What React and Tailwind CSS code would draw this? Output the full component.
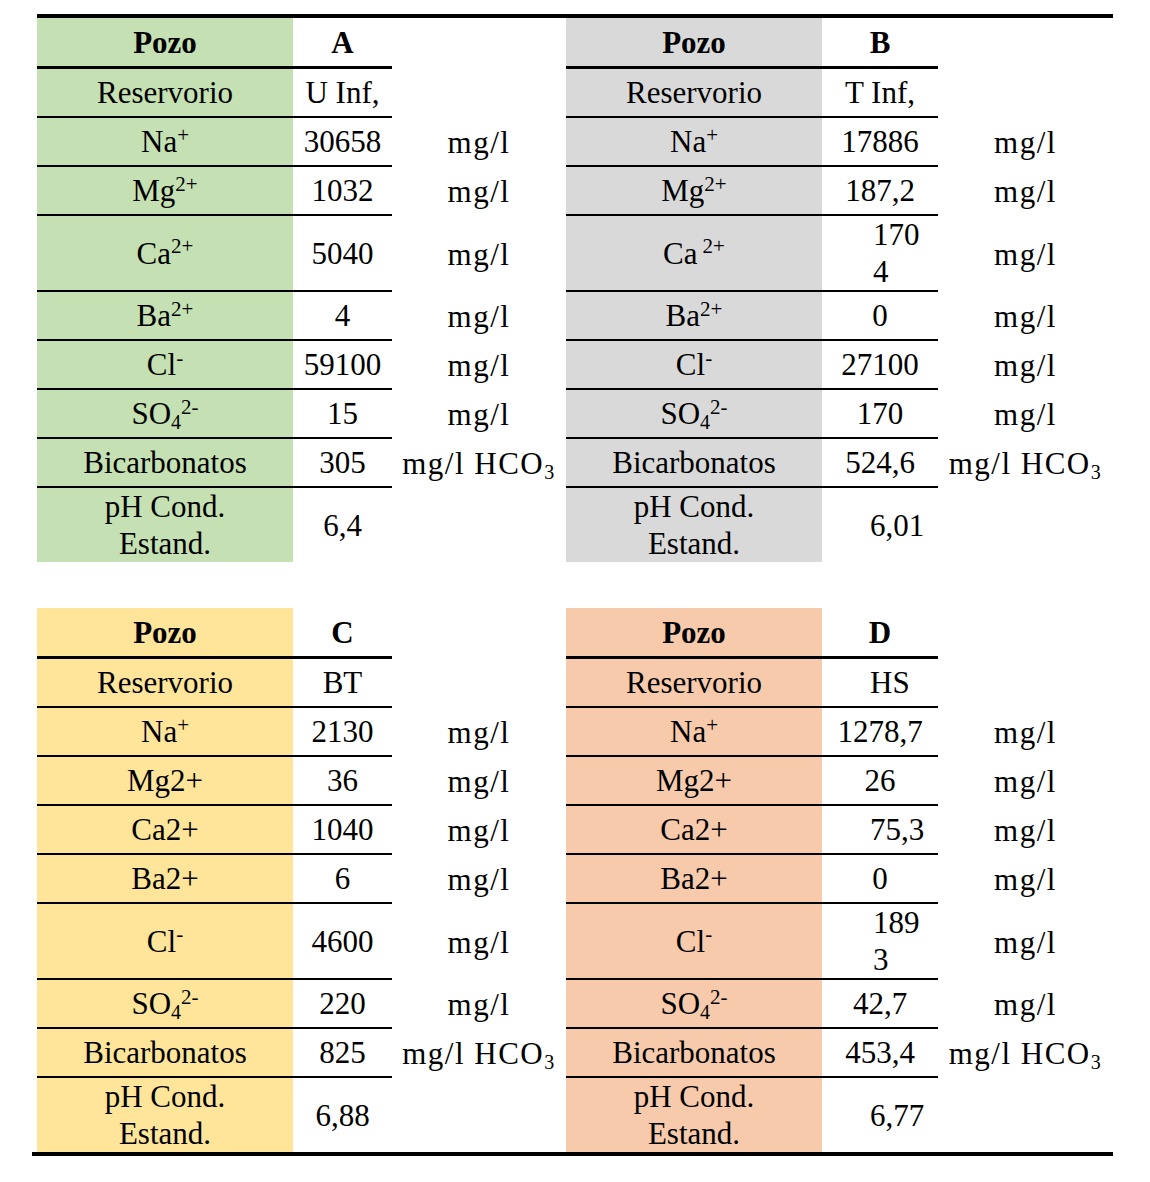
import React from 'react'

const font = { fontFamily: '"Liberation Serif", "Times New Roman", serif' }

const Sup = ({ children, gap }) => (
  <sup className={`text-[21px] ${gap ? 'ml-[5px]' : ''}`}>{children}</sup>
)
const Sub = ({ children }) => <sub className="text-[20px]">{children}</sub>

const ions = {
  na: <>Na<Sup>+</Sup></>,
  mg: <>Mg<Sup>2+</Sup></>,
  ca: <>Ca<Sup>2+</Sup></>,
  caGap: <>Ca<Sup gap>2+</Sup></>,
  ba: <>Ba<Sup>2+</Sup></>,
  cl: <>Cl<Sup>-</Sup></>,
  so4: <>SO<Sub>4</Sub><Sup>2-</Sup></>,
  bic: <>Bicarbonatos</>,
  ph: <span className="flex flex-col items-center">
    <span>pH Cond.</span>
    <span>Estand.</span>
  </span>,
}

const hco3 = <>mg/l HCO<Sub>3</Sub></>

// each section is one table: [left well, right well]
const sections = [
  {
    wells: [
      { name: 'A', bg: 'bg-[#c5e0b3]', res: 'U Inf,' },
      { name: 'B', bg: 'bg-[#d9d9d9]', res: 'T Inf,' },
    ],
    rows: [
      { l: ions.na, a: '30658', b: '17886', unit: 'mg/l' },
      { l: ions.mg, a: '1032', b: '187,2', unit: 'mg/l' },
      { l: ions.ca, r: ions.caGap, a: '5040', b: ['170', '4'], unit: 'mg/l' },
      { l: ions.ba, a: '4', b: '0', unit: 'mg/l' },
      { l: ions.cl, a: '59100', b: '27100', unit: 'mg/l' },
      { l: ions.so4, a: '15', b: '170', unit: 'mg/l' },
      { l: ions.bic, a: '305', b: '524,6', unit: hco3 },
      { l: ions.ph, a: '6,4', b: '6,01', bIndent: true, last: true },
    ],
  },
  {
    wells: [
      { name: 'C', bg: 'bg-[#ffe599]', res: 'BT' },
      { name: 'D', bg: 'bg-[#f7caac]', res: 'HS', resIndent: true },
    ],
    rows: [
      { l: ions.na, a: '2130', b: '1278,7', unit: 'mg/l' },
      { l: 'Mg2+', a: '36', b: '26', unit: 'mg/l' },
      { l: 'Ca2+', a: '1040', b: '75,3', bIndent: true, unit: 'mg/l' },
      { l: 'Ba2+', a: '6', b: '0', unit: 'mg/l' },
      { l: ions.cl, a: '4600', b: ['189', '3'], unit: 'mg/l' },
      { l: ions.so4, a: '220', b: '42,7', unit: 'mg/l' },
      { l: ions.bic, a: '825', b: '453,4', unit: hco3 },
      { l: ions.ph, a: '6,88', b: '6,77', bIndent: true, last: true },
    ],
  },
]

// children wrapped in a span so sup/sub stay inline instead of becoming flex items
function Cell({ children, className = '', line = 'border-b-2', indent, bold }) {
  return (
    <div
      className={`flex items-center min-h-[49px] leading-[37px] border-black ${line} ${
        indent ? 'justify-start pl-[48px]' : 'justify-center'
      } ${bold ? 'font-bold' : ''} ${className}`}
    >
      <span>{children}</span>
    </div>
  )
}

function Value({ v, indent, last }) {
  if (Array.isArray(v)) {
    return (
      <Cell line={last ? '' : 'border-b-2'} indent>
        <span className="flex flex-col items-start pl-[3px]">
          <span>{v[0]}</span>
          <span>{v[1]}</span>
        </span>
      </Cell>
    )
  }
  return (
    <Cell line={last ? '' : 'border-b-2'} indent={indent}>
      {v}
    </Cell>
  )
}

function Section({ section }) {
  const [left, right] = section.wells
  return (
    <div className="grid grid-cols-[256px_99px_174px_256px_116px_175px]">
      <Cell className={`${left.bg} h-[51px]`} line="border-b-[3px]" bold>Pozo</Cell>
      <Cell className="h-[51px]" line="border-b-[3px]" bold>{left.name}</Cell>
      <div />
      <Cell className={`${right.bg} h-[51px]`} line="border-b-[3px]" bold>Pozo</Cell>
      <Cell className="h-[51px]" line="border-b-[3px]" bold>{right.name}</Cell>
      <div />

      <Cell className={left.bg}>Reservorio</Cell>
      <Cell>{left.res}</Cell>
      <div />
      <Cell className={right.bg}>Reservorio</Cell>
      <Cell indent={right.resIndent}>{right.res}</Cell>
      <div />

      {section.rows.map((row, i) => (
        <React.Fragment key={i}>
          <Cell className={left.bg} line={row.last ? '' : 'border-b-2'}>{row.l}</Cell>
          <Value v={row.a} last={row.last} />
          <Cell line="" className="tracking-[1.5px]">{row.unit}</Cell>
          <Cell className={right.bg} line={row.last ? '' : 'border-b-2'}>{row.r || row.l}</Cell>
          <Value v={row.b} indent={row.bIndent} last={row.last} />
          <Cell line="" className="tracking-[1.5px]">{row.unit}</Cell>
        </React.Fragment>
      ))}
    </div>
  )
}

export default function App() {
  return (
    <div className="bg-white w-[1150px] h-[1182px] text-black text-[31px]" style={font}>
      <div className="pt-[14px] pl-[37px] w-[1113px]">
        <div className="h-[4px] bg-black" />
        <Section section={sections[0]} />
        <div className="h-[46px]" />
        <Section section={sections[1]} />
        <div className="h-[4px] bg-black -ml-[5px]" />
      </div>
    </div>
  )
}
